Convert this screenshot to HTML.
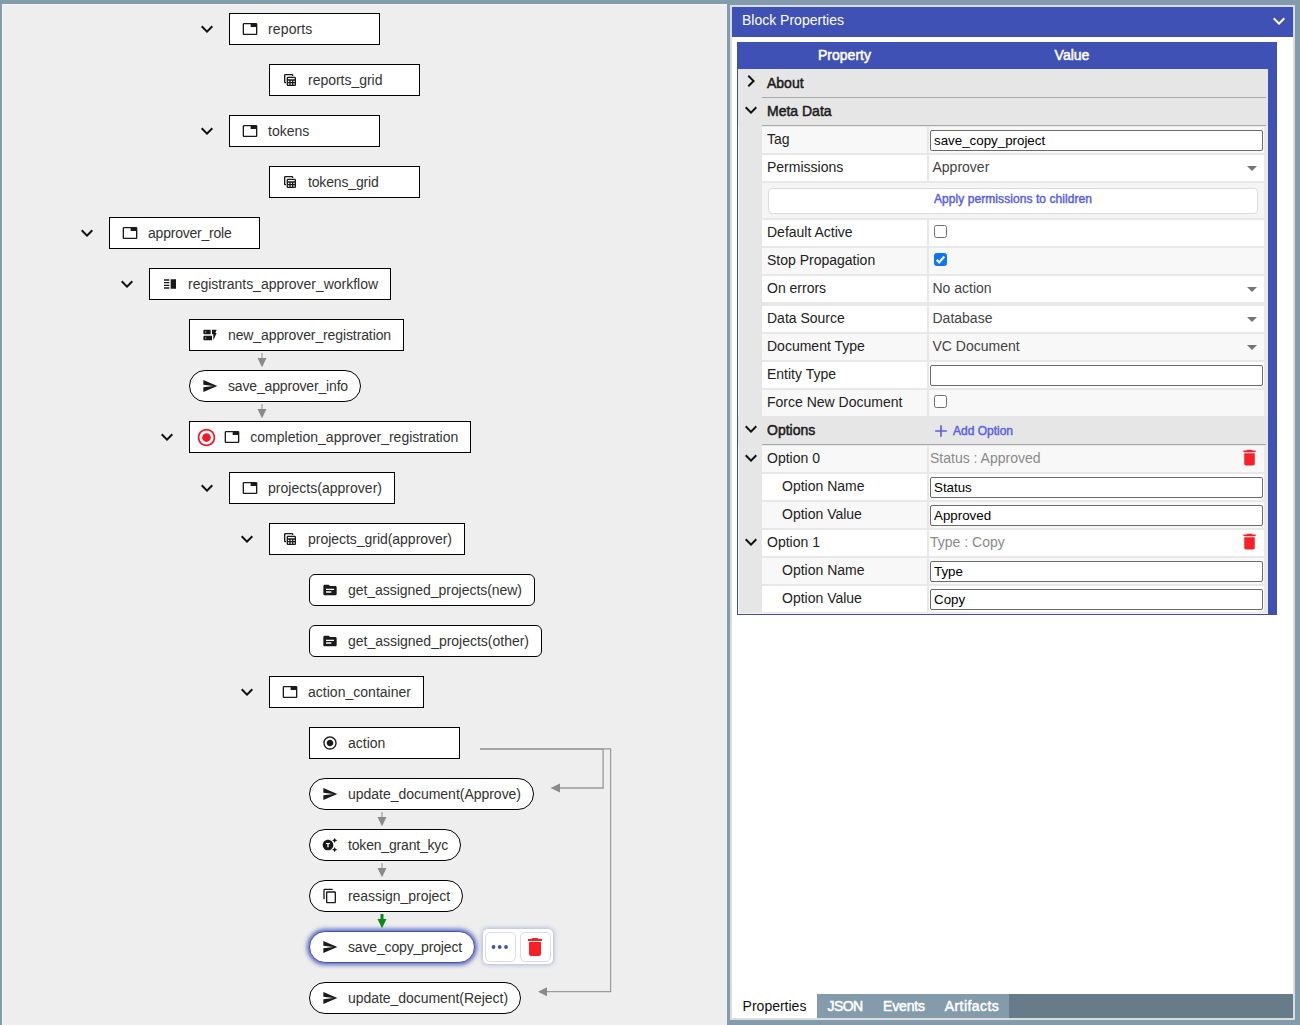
<!DOCTYPE html>
<html lang="en">
<head>
<meta charset="utf-8">
<title>Policy Configuration</title>
<style>
*,*::before,*::after{box-sizing:border-box}
html,body{margin:0;padding:0}
body{width:1300px;height:1025px;overflow:hidden;position:relative;background:#849bab;font-family:"Liberation Sans",sans-serif;font-size:14px;color:#222}
svg{display:block}
.ic{fill:currentColor;flex:none}
/* ---------- left: policy tree ---------- */
.tree-panel{position:absolute;left:2px;top:4px;width:725px;height:1021px;background:#eee;box-shadow:inset 1px 1px 0 #f4f6f8,inset -1px 0 0 #eaf0f6;overflow:hidden}
.tree-panel>*{position:absolute;margin-left:-2px;margin-top:-4px}
.wires{left:0;top:0}
.node{height:32px;background:#fff;border:1px solid #000;display:flex;align-items:center;padding:0 0 0 12px;color:#333;white-space:nowrap;font-size:14px;line-height:16px}
.node .ic{color:#1a1a1a;margin-right:10px}
.node .ic.stop{margin:0 7.3px 0 -6px}
.node.pill{border-radius:16px}
.node.round{border-radius:6px}
.node.sel{border-color:#3f51b5;box-shadow:0 0 4px 2px rgba(63,81,181,.85)}
.lbl{display:block;position:relative;top:0}
.chev{width:24px;height:24px;color:#111}
.toolbar{left:483px;top:929px;width:70px;height:35px;background:#fff;border-radius:5px;box-shadow:0 0 4px 1px rgba(63,81,181,.35)}
.tbtn{position:absolute;top:2.5px;width:30.5px;height:30px;border:1px solid #dcdcdc;border-radius:5px;background:#fff}
/* ---------- right: block properties ---------- */
.props-panel{position:absolute;left:730px;top:5px;width:565px;height:1015px;background:#fff;border:2px solid #dcdcdc}
.props-panel>*{position:absolute;margin-left:-732px;margin-top:-7px}
.ph{left:732px;top:7px;width:561px;height:30px;background:#3f51b5;color:#fff;box-shadow:-2px -2px 0 #d8ddf6,2px -2px 0 #d8ddf6}
.pt{position:absolute;left:10px;top:5px;line-height:16px;font-size:14px}
.phc{position:absolute;left:535px;top:1.5px}
.grid{left:737px;top:42px;width:540px;height:573px;background:#3f51b5;box-shadow:inset 1px 0 0 #46508a,inset -1px 0 0 #46508a,inset 0 -1px 0 #46508a}
.grid>*{position:absolute;margin-left:-737px;margin-top:-42px}
.grid::before{content:"";position:absolute;left:0;top:27px;width:531px;height:545px;background:#e8e8e8;border-left:1px solid #464f80;box-shadow:inset 1px -1px 0 #f1f1fa,inset -1px 0 0 #eef0fb}
.gh{left:737px;top:42px;width:540px;height:27px;color:#fff;-webkit-text-stroke:.5px #fff}
.gh span{position:absolute;top:5px;line-height:16px;width:100px;text-align:center}
.ghp{left:57.5px}
.ghv{left:285px}
.gutter{left:739px;top:69px;width:23px;height:543px;background:#e6e6e6}
.exp{position:absolute;left:739px;width:24px;height:24px;color:#111}
.sec{left:738px;width:530px;background:#e6e6e6}
.sec::after{content:"";position:absolute;left:24px;right:2px;bottom:0;height:1px;background:#a9a9a9}
.sec .exp{left:1px;top:0}
.sect{position:absolute;left:29px;top:6px;line-height:16px;color:#1c1c1c;-webkit-text-stroke:.5px #1c1c1c}
.pn,.pv{background:#fff;line-height:16px;padding-top:4px;white-space:nowrap;color:#222}
.pn{left:762px;width:165px}
.pv{left:929px;width:335px}
.alt{background:#f8f8f8}
.tin{position:absolute;left:1px;top:3px;width:333px;height:21px;border:1px solid #6b6b6b;border-radius:2px;padding:1px 2px 1px 3px;margin:0;font-family:"Liberation Sans",sans-serif;font-size:13.333px;color:#000;background:#fff;outline:none}
.selv{position:absolute;left:3.5px;top:4px;color:#444}
.dd{position:absolute;left:311px;top:1px}
.cb{position:absolute;left:5px;top:5px;width:13px;height:13px;border:1px solid #6f6f6f;border-radius:2.5px;background:#fff}
.cb.on{background:#0b75fb;border-color:#0b75fb}
.cb svg{position:absolute;left:-1px;top:-1px}
.sum{position:absolute;left:1px;top:4px;color:#8a8a8a}
.tr{position:absolute;left:310px;top:1px}
.applyrow{left:762px;width:502px;background:#f5f5f5}
.applybtn{position:absolute;left:6px;top:4.5px;width:490px;height:26px;border:1px solid #dcdcdc;border-radius:4px;background:#fff;color:#5b5fe3;font-family:"Liberation Sans",sans-serif;font-weight:normal;-webkit-text-stroke:.45px #5b5fe3;font-size:12px;letter-spacing:.07px;padding:0 0 3px;margin:0;line-height:16px;text-align:center}
.addopt{position:absolute;left:193px;top:0;height:28px;color:#5b5fe3;-webkit-text-stroke:.45px #5b5fe3;font-size:12px}
.addopt .ic{position:absolute;left:0;top:4.5px}
.addopt span{position:absolute;left:22px;top:6.5px;line-height:16px;white-space:nowrap}
.tabs{left:732px;top:994px;width:561px;height:24px;background:#667c89;display:flex}
.tab{display:block;height:24px;line-height:24px;text-align:center;color:#fff;-webkit-text-stroke:.5px #fff;background:#849bab;font-size:14px;letter-spacing:-.15px}
.tab.act{width:85px;background:#fff;color:#111;-webkit-text-stroke:0;letter-spacing:0}

</style>
</head>
<body>
<main class="tree-panel">
<svg class="wires" width="725" height="1021" viewBox="0 0 725 1021">
<path d="M262 353V359" stroke="#8a8a8a" stroke-width="1" fill="none"/><path d="M257.5 358H266.5L262 367.3Z" fill="#8a8a8a"/>
<path d="M262 404V410" stroke="#8a8a8a" stroke-width="1" fill="none"/><path d="M257.5 409H266.5L262 418.3Z" fill="#8a8a8a"/>
<path d="M382 812V818" stroke="#8a8a8a" stroke-width="1" fill="none"/><path d="M377.5 817H386.5L382 826.3Z" fill="#8a8a8a"/>
<path d="M382 863V869" stroke="#8a8a8a" stroke-width="1" fill="none"/><path d="M377.5 868H386.5L382 877.3Z" fill="#8a8a8a"/>
<path d="M382 914V920" stroke="#0a8a14" stroke-width="3" fill="none"/><path d="M377.5 919H386.5L382 928.3Z" fill="#0a8a14"/>
<path d="M480 749.200H603.100V788H559" stroke="#999" stroke-width="1.300" fill="none"/>
<path d="M480 748.800H610.600V991.700H546" stroke="#999" stroke-width="1.200" fill="none"/>
<path d="M560 783.500V792.500L550.500 788Z" fill="#8a8a8a"/>
<path d="M547 987.200V996.200L538 991.700Z" fill="#8a8a8a"/>
</svg>
<span class="chev" style="left:195px;top:17px"><svg class="ic" style="width:24px;height:24px;" viewBox="0 0 24 24"><path d="M16.590 8.590L12 13.170 7.410 8.590 6 10l6 6 6-6z"/></svg></span>
<div class="node rect" style="left:229px;top:13px;width:151px"><svg class="ic" style="width:16px;height:16px;" viewBox="0 0 24 24"><path d="M21 3H3c-1.1 0-2 .9-2 2v14c0 1.1.9 2 2 2h18c1.1 0 2-.9 2-2V5c0-1.1-.9-2-2-2zm0 16H3V5h10v4h8v10z"/></svg><span class="lbl" style="letter-spacing:0.131px">reports</span></div>
<div class="node rect" style="left:269px;top:64px;width:151px"><svg class="ic" style="width:16px;height:16px;" viewBox="0 0 24 24"><path d="M19 7H9c-1.1 0-2 .9-2 2v10c0 1.1.9 2 2 2h10c1.1 0 2-.9 2-2V9c0-1.1-.9-2-2-2zm0 2v2H9V9h10zm-6 6v-2h2v2h-2zm2 2v2h-2v-2h2zm-4-2H9v-2h2v2zm6-2h2v2h-2v-2zm-8 4h2v2H9v-2zm8 2v-2h2v2h-2zM6 17H5c-1.1 0-2-.9-2-2V5c0-1.1.9-2 2-2h10c1.1 0 2 .9 2 2v1h-2V5H5v10h1v2z"/></svg><span class="lbl" style="letter-spacing:-0.025px">reports_grid</span></div>
<span class="chev" style="left:195px;top:119px"><svg class="ic" style="width:24px;height:24px;" viewBox="0 0 24 24"><path d="M16.590 8.590L12 13.170 7.410 8.590 6 10l6 6 6-6z"/></svg></span>
<div class="node rect" style="left:229px;top:115px;width:151px"><svg class="ic" style="width:16px;height:16px;" viewBox="0 0 24 24"><path d="M21 3H3c-1.1 0-2 .9-2 2v14c0 1.1.9 2 2 2h18c1.1 0 2-.9 2-2V5c0-1.1-.9-2-2-2zm0 16H3V5h10v4h8v10z"/></svg><span class="lbl">tokens</span></div>
<div class="node rect" style="left:269px;top:166px;width:151px"><svg class="ic" style="width:16px;height:16px;" viewBox="0 0 24 24"><path d="M19 7H9c-1.1 0-2 .9-2 2v10c0 1.1.9 2 2 2h10c1.1 0 2-.9 2-2V9c0-1.1-.9-2-2-2zm0 2v2H9V9h10zm-6 6v-2h2v2h-2zm2 2v2h-2v-2h2zm-4-2H9v-2h2v2zm6-2h2v2h-2v-2zm-8 4h2v2H9v-2zm8 2v-2h2v2h-2zM6 17H5c-1.1 0-2-.9-2-2V5c0-1.1.9-2 2-2h10c1.1 0 2 .9 2 2v1h-2V5H5v10h1v2z"/></svg><span class="lbl" style="letter-spacing:-0.154px">tokens_grid</span></div>
<span class="chev" style="left:75px;top:221px"><svg class="ic" style="width:24px;height:24px;" viewBox="0 0 24 24"><path d="M16.590 8.590L12 13.170 7.410 8.590 6 10l6 6 6-6z"/></svg></span>
<div class="node rect" style="left:109px;top:217px;width:151px"><svg class="ic" style="width:16px;height:16px;" viewBox="0 0 24 24"><path d="M21 3H3c-1.1 0-2 .9-2 2v14c0 1.1.9 2 2 2h18c1.1 0 2-.9 2-2V5c0-1.1-.9-2-2-2zm0 16H3V5h10v4h8v10z"/></svg><span class="lbl" style="letter-spacing:-0.222px">approver_role</span></div>
<span class="chev" style="left:115px;top:272px"><svg class="ic" style="width:24px;height:24px;" viewBox="0 0 24 24"><path d="M16.590 8.590L12 13.170 7.410 8.590 6 10l6 6 6-6z"/></svg></span>
<div class="node rect" style="left:149px;top:268px;width:242px"><svg class="ic" style="width:16px;height:16px;" viewBox="0 0 24 24"><path d="M3 15h8v-2H3v2zm0 4h8v-2H3v2zm0-8h8V9H3v2zm0-6v2h8V5H3zm10 0h8v14h-8V5z"/></svg><span class="lbl" style="letter-spacing:-0.022px">registrants_approver_workflow</span></div>
<div class="node rect" style="left:189px;top:319px;width:215px"><svg class="ic" style="width:16px;height:16px;" viewBox="0 0 24 24"><path d="M17 20v-9h-2V4h7l-2 5h2l-5 11zm-2-7v7H4c-1.1 0-2-.9-2-2v-3c0-1.1.9-2 2-2h11zm-8.75 2.750h-1.500v1.500h1.500v-1.500zM13 4v7H4c-1.1 0-2-.9-2-2V6c0-1.1.9-2 2-2h9zM6.250 6.750h-1.500v1.500h1.500v-1.500z"/></svg><span class="lbl" style="letter-spacing:-0.111px">new_approver_registration</span></div>
<div class="node pill" style="left:189px;top:370px;width:172px"><svg class="ic" style="width:16px;height:16px;" viewBox="0 0 24 24"><path d="M2.010 21L23 12 2.010 3 2 10l15 2-15 2z"/></svg><span class="lbl" style="letter-spacing:-0.166px">save_approver_info</span></div>
<span class="chev" style="left:155px;top:425px"><svg class="ic" style="width:24px;height:24px;" viewBox="0 0 24 24"><path d="M16.590 8.590L12 13.170 7.410 8.590 6 10l6 6 6-6z"/></svg></span>
<div class="node rect" style="left:189px;top:421px;width:282px"><svg class="ic stop" style="color:#ee1c25;width:21px;height:21px;" viewBox="0 0 24 24"><path d="M12 7c-2.760 0-5 2.240-5 5s2.240 5 5 5 5-2.240 5-5-2.240-5-5-5zm0-5C6.480 2 2 6.480 2 12s4.480 10 10 10 10-4.480 10-10S17.520 2 12 2zm0 18c-4.420 0-8-3.580-8-8s3.580-8 8-8 8 3.580 8 8-3.580 8-8 8z"/></svg><svg class="ic" style="width:16px;height:16px;" viewBox="0 0 24 24"><path d="M21 3H3c-1.1 0-2 .9-2 2v14c0 1.1.9 2 2 2h18c1.1 0 2-.9 2-2V5c0-1.1-.9-2-2-2zm0 16H3V5h10v4h8v10z"/></svg><span class="lbl" style="letter-spacing:0.006px">completion_approver_registration</span></div>
<span class="chev" style="left:195px;top:476px"><svg class="ic" style="width:24px;height:24px;" viewBox="0 0 24 24"><path d="M16.590 8.590L12 13.170 7.410 8.590 6 10l6 6 6-6z"/></svg></span>
<div class="node rect" style="left:229px;top:472px;width:166px"><svg class="ic" style="width:16px;height:16px;" viewBox="0 0 24 24"><path d="M21 3H3c-1.1 0-2 .9-2 2v14c0 1.1.9 2 2 2h18c1.1 0 2-.9 2-2V5c0-1.1-.9-2-2-2zm0 16H3V5h10v4h8v10z"/></svg><span class="lbl" style="letter-spacing:0.022px">projects(approver)</span></div>
<span class="chev" style="left:235px;top:527px"><svg class="ic" style="width:24px;height:24px;" viewBox="0 0 24 24"><path d="M16.590 8.590L12 13.170 7.410 8.590 6 10l6 6 6-6z"/></svg></span>
<div class="node rect" style="left:269px;top:523px;width:196px"><svg class="ic" style="width:16px;height:16px;" viewBox="0 0 24 24"><path d="M19 7H9c-1.1 0-2 .9-2 2v10c0 1.1.9 2 2 2h10c1.1 0 2-.9 2-2V9c0-1.1-.9-2-2-2zm0 2v2H9V9h10zm-6 6v-2h2v2h-2zm2 2v2h-2v-2h2zm-4-2H9v-2h2v2zm6-2h2v2h-2v-2zm-8 4h2v2H9v-2zm8 2v-2h2v2h-2zM6 17H5c-1.1 0-2-.9-2-2V5c0-1.1.9-2 2-2h10c1.1 0 2 .9 2 2v1h-2V5H5v10h1v2z"/></svg><span class="lbl" style="letter-spacing:-0.032px">projects_grid(approver)</span></div>
<div class="node round" style="left:309px;top:574px;width:226px"><svg class="ic" style="width:16px;height:16px;" viewBox="0 0 24 24"><path d="M20 6h-8l-2-2H4c-1.100 0-1.990.9-1.990 2L2 18c0 1.100.9 2 2 2h16c1.100 0 2-.9 2-2V8c0-1.100-.9-2-2-2zm-6 10H6v-2h8v2zm4-4H6v-2h12v2z"/></svg><span class="lbl" style="letter-spacing:-0.043px">get_assigned_projects(new)</span></div>
<div class="node round" style="left:309px;top:625px;width:233px"><svg class="ic" style="width:16px;height:16px;" viewBox="0 0 24 24"><path d="M20 6h-8l-2-2H4c-1.100 0-1.990.9-1.990 2L2 18c0 1.100.9 2 2 2h16c1.100 0 2-.9 2-2V8c0-1.100-.9-2-2-2zm-6 10H6v-2h8v2zm4-4H6v-2h12v2z"/></svg><span class="lbl" style="letter-spacing:-0.012px">get_assigned_projects(other)</span></div>
<span class="chev" style="left:235px;top:680px"><svg class="ic" style="width:24px;height:24px;" viewBox="0 0 24 24"><path d="M16.590 8.590L12 13.170 7.410 8.590 6 10l6 6 6-6z"/></svg></span>
<div class="node rect" style="left:269px;top:676px;width:155px"><svg class="ic" style="width:16px;height:16px;" viewBox="0 0 24 24"><path d="M21 3H3c-1.1 0-2 .9-2 2v14c0 1.1.9 2 2 2h18c1.1 0 2-.9 2-2V5c0-1.1-.9-2-2-2zm0 16H3V5h10v4h8v10z"/></svg><span class="lbl" style="letter-spacing:0.016px">action_container</span></div>
<div class="node rect" style="left:309px;top:727px;width:151px"><svg class="ic" style="width:16px;height:16px;" viewBox="0 0 24 24"><path d="M12 7c-2.760 0-5 2.240-5 5s2.240 5 5 5 5-2.240 5-5-2.240-5-5-5zm0-5C6.480 2 2 6.480 2 12s4.480 10 10 10 10-4.480 10-10S17.520 2 12 2zm0 18c-4.420 0-8-3.580-8-8s3.580-8 8-8 8 3.580 8 8-3.580 8-8 8z"/></svg><span class="lbl">action</span></div>
<div class="node pill" style="left:309px;top:778px;width:225px"><svg class="ic" style="width:16px;height:16px;" viewBox="0 0 24 24"><path d="M2.010 21L23 12 2.010 3 2 10l15 2-15 2z"/></svg><span class="lbl" style="letter-spacing:-0.023px">update_document(Approve)</span></div>
<div class="node pill" style="left:309px;top:829px;width:152px"><svg class="ic" style="width:16px;height:16px;" viewBox="0 0 24 24"><path d="M9 4c-4.420 0-8 3.580-8 8s3.580 8 8 8 8-3.580 8-8-3.580-8-8-8zm3 6.500h-2v5H8v-5H6V9h6v1.500zm8.250-6.750L23 5l-2.750 1.250L19 9l-1.250-2.750L15 5l2.750-1.250L19 1l1.250 2.750zm0 14L23 19l-2.750 1.250L19 23l-1.250-2.750L15 19l2.750-1.250L19 15l1.250 2.750z"/></svg><span class="lbl" style="letter-spacing:-0.182px">token_grant_kyc</span></div>
<div class="node pill" style="left:309px;top:880px;width:154px"><svg class="ic" style="width:16px;height:16px;" viewBox="0 0 24 24"><path d="M16 1H4c-1.100 0-2 .9-2 2v14h2V3h12V1zm3 4H8c-1.100 0-2 .9-2 2v14c0 1.100.9 2 2 2h11c1.100 0 2-.9 2-2V7c0-1.100-.9-2-2-2zm0 16H8V7h11v14z"/></svg><span class="lbl" style="letter-spacing:-0.046px">reassign_project</span></div>
<div class="node pill sel" style="left:309px;top:931px;width:166px"><svg class="ic" style="width:16px;height:16px;" viewBox="0 0 24 24"><path d="M2.010 21L23 12 2.010 3 2 10l15 2-15 2z"/></svg><span class="lbl" style="letter-spacing:-0.162px">save_copy_project</span></div>
<div class="node pill" style="left:309px;top:982px;width:212px"><svg class="ic" style="width:16px;height:16px;" viewBox="0 0 24 24"><path d="M2.010 21L23 12 2.010 3 2 10l15 2-15 2z"/></svg><span class="lbl" style="letter-spacing:-0.048px">update_document(Reject)</span></div>
<div class="toolbar"><span class="tbtn" style="left:2px"><svg width="30" height="30" viewBox="0 0 30 30" style="position:absolute;left:-1px;top:-1px"><circle cx="8.500" cy="15" r="1.900" fill="#3f51b5"/><circle cx="14.700" cy="15" r="1.900" fill="#3f51b5"/><circle cx="21" cy="15" r="1.900" fill="#3f51b5"/></svg></span><span class="tbtn" style="left:37px"><svg class="ic" style="color:#f81f27;width:24px;height:24px;position:absolute;left:2px;top:2px" viewBox="0 0 24 24"><path d="M6 19c0 1.100.9 2 2 2h8c1.100 0 2-.9 2-2V7H6v12zM19 4h-3.500l-1-1h-5l-1 1H5v2h14V4z"/></svg></span></div>
</main>
<aside class="props-panel">
<header class="ph"><span class="pt">Block Properties</span><svg class="ic phc" style="color:#fff;width:24px;height:24px;" viewBox="0 0 24 24"><path d="M16.590 8.590L12 13.170 7.410 8.590 6 10l6 6 6-6z"/></svg></header>
<section class="grid">
<div class="gh"><span class="ghp">Property</span><span class="ghv">Value</span></div>
<div class="gutter"></div>
<div class="sec" style="top:69px;height:29px"><span class="exp" style="top:0px"><svg class="ic" style="width:24px;height:24px;" viewBox="0 0 24 24"><path d="M10 6L8.590 7.410 13.170 12l-4.580 4.590L10 18l6-6z"/></svg></span><span class="sect" style="top:6px">About</span></div>
<div class="sec" style="top:98px;height:28px"><span class="exp" style="top:0px"><svg class="ic" style="width:24px;height:24px;" viewBox="0 0 24 24"><path d="M16.590 8.590L12 13.170 7.410 8.590 6 10l6 6 6-6z"/></svg></span><span class="sect" style="top:5px">Meta Data</span></div>
<div class="pn alt" style="top:127px;height:26px;padding-left:5px">Tag</div><div class="pv alt" style="top:127px;height:26px"><input class="tin" type="text" value="save_copy_project"></div>
<div class="pn " style="top:155px;height:26px;padding-left:5px">Permissions</div><div class="pv " style="top:155px;height:26px"><span class="selv">Approver</span><svg class="ic dd" style="color:#757575;width:24px;height:24px;" viewBox="0 0 24 24"><path d="M7 10l5 5 5-5z"/></svg></div>
<div class="applyrow" style="top:183px;height:35px"><button class="applybtn" type="button">Apply permissions to children</button></div>
<div class="pn " style="top:220px;height:26px;padding-left:5px">Default Active</div><div class="pv " style="top:220px;height:26px"><span class="cb"></span></div>
<div class="pn alt" style="top:248px;height:26px;padding-left:5px">Stop Propagation</div><div class="pv alt" style="top:248px;height:26px"><span class="cb on"><svg viewBox="0 0 13 13" width="13" height="13"><path d="M2.700 6.900L5.200 9.400L10.300 3.600" stroke="#fff" stroke-width="2.200" fill="none"/></svg></span></div>
<div class="pn " style="top:276px;height:26px;padding-left:5px">On errors</div><div class="pv " style="top:276px;height:26px"><span class="selv">No action</span><svg class="ic dd" style="color:#757575;width:24px;height:24px;" viewBox="0 0 24 24"><path d="M7 10l5 5 5-5z"/></svg></div>
<div class="pn " style="top:306px;height:26px;padding-left:5px">Data Source</div><div class="pv " style="top:306px;height:26px"><span class="selv">Database</span><svg class="ic dd" style="color:#757575;width:24px;height:24px;" viewBox="0 0 24 24"><path d="M7 10l5 5 5-5z"/></svg></div>
<div class="pn alt" style="top:334px;height:26px;padding-left:5px">Document Type</div><div class="pv alt" style="top:334px;height:26px"><span class="selv">VC Document</span><svg class="ic dd" style="color:#757575;width:24px;height:24px;" viewBox="0 0 24 24"><path d="M7 10l5 5 5-5z"/></svg></div>
<div class="pn " style="top:362px;height:26px;padding-left:5px">Entity Type</div><div class="pv " style="top:362px;height:26px"><input class="tin" type="text" value=""></div>
<div class="pn alt" style="top:390px;height:26px;padding-left:5px">Force New Document</div><div class="pv alt" style="top:390px;height:26px"><span class="cb"></span></div>
<div class="sec" style="top:416px;height:29px"><span class="exp" style="top:1px"><svg class="ic" style="width:24px;height:24px;" viewBox="0 0 24 24"><path d="M16.590 8.590L12 13.170 7.410 8.590 6 10l6 6 6-6z"/></svg></span><span class="sect" style="top:6px">Options</span><span class="addopt"><svg class="ic" style="color:#5b5fe3;width:20px;height:20px;" viewBox="0 0 24 24"><path d="M19 13h-6v6h-2v-6H5v-2h6V5h2v6h6v2z"/></svg><span>Add Option</span></span></div>
<span class="exp" style="top:446px"><svg class="ic" style="width:24px;height:24px;" viewBox="0 0 24 24"><path d="M16.590 8.590L12 13.170 7.410 8.590 6 10l6 6 6-6z"/></svg></span><div class="pn alt" style="top:446px;height:26px;padding-left:5px">Option 0</div><div class="pv alt" style="top:446px;height:26px"><span class="sum">Status : Approved</span><svg class="ic tr" style="color:#f81f27;width:21px;height:21px;" viewBox="0 0 24 24"><path d="M6 19c0 1.100.9 2 2 2h8c1.100 0 2-.9 2-2V7H6v12zM19 4h-3.500l-1-1h-5l-1 1H5v2h14V4z"/></svg></div>
<div class="pn " style="top:474px;height:26px;padding-left:20px">Option Name</div><div class="pv " style="top:474px;height:26px"><input class="tin" type="text" value="Status"></div>
<div class="pn alt" style="top:502px;height:26px;padding-left:20px">Option Value</div><div class="pv alt" style="top:502px;height:26px"><input class="tin" type="text" value="Approved"></div>
<span class="exp" style="top:530px"><svg class="ic" style="width:24px;height:24px;" viewBox="0 0 24 24"><path d="M16.590 8.590L12 13.170 7.410 8.590 6 10l6 6 6-6z"/></svg></span><div class="pn " style="top:530px;height:26px;padding-left:5px">Option 1</div><div class="pv " style="top:530px;height:26px"><span class="sum">Type : Copy</span><svg class="ic tr" style="color:#f81f27;width:21px;height:21px;" viewBox="0 0 24 24"><path d="M6 19c0 1.100.9 2 2 2h8c1.100 0 2-.9 2-2V7H6v12zM19 4h-3.500l-1-1h-5l-1 1H5v2h14V4z"/></svg></div>
<div class="pn alt" style="top:558px;height:26px;padding-left:20px">Option Name</div><div class="pv alt" style="top:558px;height:26px"><input class="tin" type="text" value="Type"></div>
<div class="pn " style="top:586px;height:26px;padding-left:20px">Option Value</div><div class="pv " style="top:586px;height:26px"><input class="tin" type="text" value="Copy"></div>
</section>
<nav class="tabs"><span class="tab act">Properties</span><span class="tab" style="width:56px;letter-spacing:-.6px">JSON</span><span class="tab" style="width:62px">Events</span><span class="tab" style="width:74px;letter-spacing:.45px">Artifacts</span></nav>
</aside>
</body>
</html>
